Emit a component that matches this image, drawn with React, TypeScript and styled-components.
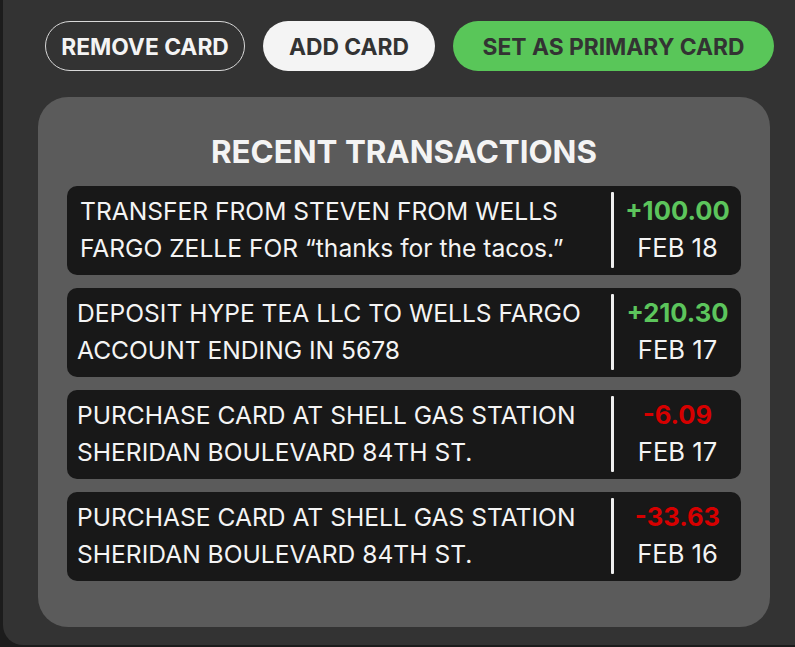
import React from "react";
import styled, { createGlobalStyle } from "styled-components";

const GlobalStyle = createGlobalStyle`
  html, body {
    margin: 0;
    padding: 0;
    background: #1c1c1c;
    font-family: Inter, "Noto Sans", sans-serif;
    overflow: hidden;
  }
`;

const Shell = styled.div`
  margin-left: 3px;
  height: 645px;
  background: #333333;
  border-radius: 0 0 0 20px;
  box-sizing: border-box;
  padding-top: 21px;
`;

const ButtonBar = styled.div`
  display: flex;
  gap: 18px;
  padding-left: 42px;
`;

const PillButton = styled.button<{ $variant: "outline" | "light" | "green"; $w: number }>`
  height: 50px;
  width: ${(p) => p.$w}px;
  border-radius: 25px;
  box-sizing: border-box;
  font-family: Inter, "Noto Sans", sans-serif;
  font-weight: 700;
  font-size: 22.8px;
  cursor: pointer;
  padding: 0;
  border: ${(p) => (p.$variant === "outline" ? "1px solid #d8d8d8" : "none")};
  background: ${(p) =>
    p.$variant === "outline" ? "transparent" : p.$variant === "light" ? "#f4f4f4" : "#59c659"};
  color: ${(p) => (p.$variant === "outline" ? "#f4f4f4" : "#333333")};
`;

const Panel = styled.section`
  margin: 26px 0 0 35px;
  width: 732px;
  height: 530px;
  background: #5b5b5b;
  border-radius: 30px;
  box-sizing: border-box;
  padding: 35px 29px 0 29px;
`;

const Title = styled.h2`
  margin: 0 0 14px 0;
  text-align: center;
  color: #f4f4f4;
  font-weight: 700;
  font-size: 31.3px;
  line-height: 40px;
`;

const List = styled.div`
  display: flex;
  flex-direction: column;
  gap: 13px;
`;

const Row = styled.div`
  display: grid;
  grid-template-columns: 1fr 3px 127px;
  height: 89px;
  background: #181818;
  border-radius: 10px;
  padding: 6px 0 7px 0;
  box-sizing: border-box;
`;

const Description = styled.div<{ $inset: number }>`
  display: flex;
  align-items: center;
  padding-left: ${(p) => p.$inset}px;
  color: #f4f4f4;
  font-size: 24.6px;
  line-height: 37px;
`;

const Divider = styled.div`
  background: #efefef;
  border-radius: 1px;
`;

const Side = styled.div`
  display: flex;
  flex-direction: column;
  justify-content: center;
  align-items: center;
  line-height: 37px;
  padding-bottom: 2px;
`;

const Amount = styled.div<{ $positive: boolean }>`
  font-weight: 700;
  font-size: 25.6px;
  color: ${(p) => (p.$positive ? "#5cc55c" : "#d60000")};
`;

const DateText = styled.div`
  font-size: 25.6px;
  color: #f4f4f4;
`;

const transactions = [
  {
    text: "TRANSFER FROM STEVEN FROM WELLS FARGO ZELLE FOR \u201cthanks for the tacos.\u201d",
    amount: "+100.00",
    date: "FEB 18",
    inset: 13,
  },
  {
    text: "DEPOSIT HYPE TEA LLC TO WELLS FARGO ACCOUNT ENDING IN 5678",
    amount: "+210.30",
    date: "FEB 17",
    inset: 10,
  },
  {
    text: "PURCHASE CARD AT SHELL GAS STATION SHERIDAN BOULEVARD 84TH ST.",
    amount: "-6.09",
    date: "FEB 17",
    inset: 10,
  },
  {
    text: "PURCHASE CARD AT SHELL GAS STATION SHERIDAN BOULEVARD 84TH ST.",
    amount: "-33.63",
    date: "FEB 16",
    inset: 10,
  },
];

export default function App() {
  return (
    <>
      <GlobalStyle />
      <Shell>
        <ButtonBar>
          <PillButton $variant="outline" $w={200}>REMOVE CARD</PillButton>
          <PillButton $variant="light" $w={172}>ADD CARD</PillButton>
          <PillButton $variant="green" $w={321}>SET AS PRIMARY CARD</PillButton>
        </ButtonBar>
        <Panel>
          <Title>RECENT TRANSACTIONS</Title>
          <List>
            {transactions.map((t, i) => (
              <Row key={i}>
                <Description $inset={t.inset}>{t.text}</Description>
                <Divider />
                <Side>
                  <Amount $positive={t.amount.startsWith("+")}>{t.amount}</Amount>
                  <DateText>{t.date}</DateText>
                </Side>
              </Row>
            ))}
          </List>
        </Panel>
      </Shell>
    </>
  );
}
